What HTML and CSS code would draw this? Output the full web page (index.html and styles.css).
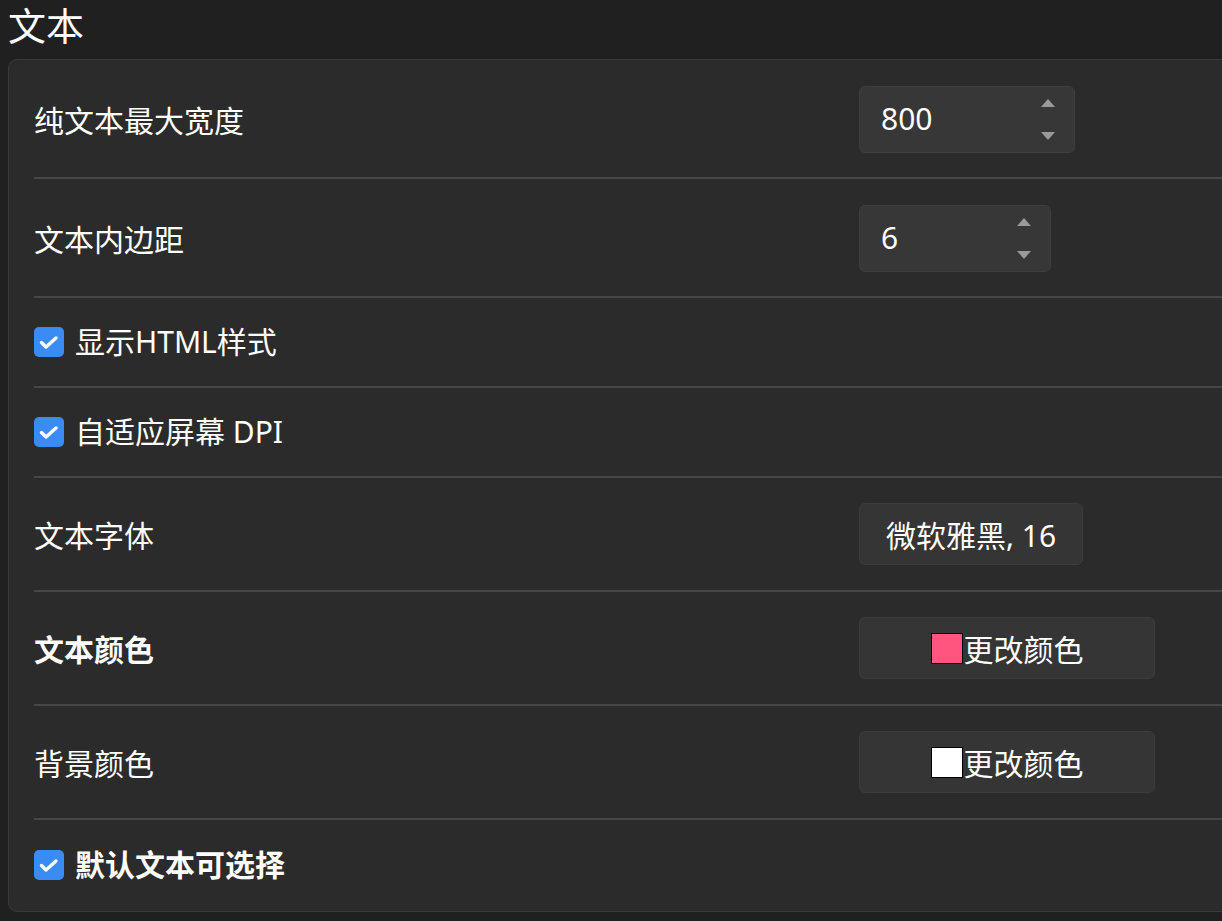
FILE: index.html
```html
<!DOCTYPE html>
<html lang="zh-CN">
<head>
<meta charset="utf-8">
<title>文本</title>
<link rel="stylesheet" href="styles.css">
</head>
<body>
<div class="page">
  <h1 class="title">文本</h1>
  <div class="panel">
    <div class="row row-spin">
      <div class="label">纯文本最大宽度</div>
      <div class="spin spin-wide">
        <span class="spin-value">800</span>
        <span class="arrows"><span class="up"></span><span class="down"></span></span>
      </div>
    </div>
    <div class="sep"></div>
    <div class="row row-spin">
      <div class="label">文本内边距</div>
      <div class="spin spin-narrow">
        <span class="spin-value">6</span>
        <span class="arrows"><span class="up"></span><span class="down"></span></span>
      </div>
    </div>
    <div class="sep"></div>
    <div class="row row-check">
      <label class="check"><span class="box"><svg viewBox="0 0 30 30" width="30" height="30"><path d="M7.5 15.5 L12 20 L22 11" fill="none" stroke="#fff" stroke-width="3.4" stroke-linecap="round" stroke-linejoin="round"/></svg></span><span class="check-text">显示HTML样式</span></label>
    </div>
    <div class="sep"></div>
    <div class="row row-check">
      <label class="check"><span class="box"><svg viewBox="0 0 30 30" width="30" height="30"><path d="M7.5 15.5 L12 20 L22 11" fill="none" stroke="#fff" stroke-width="3.4" stroke-linecap="round" stroke-linejoin="round"/></svg></span><span class="check-text">自适应屏幕 DPI</span></label>
    </div>
    <div class="sep"></div>
    <div class="row row-btn">
      <div class="label">文本字体</div>
      <button class="btn btn-font">微软雅黑, 16</button>
    </div>
    <div class="sep"></div>
    <div class="row row-btn">
      <div class="label bold">文本颜色</div>
      <button class="btn btn-color"><span class="swatch swatch-pink"></span>更改颜色</button>
    </div>
    <div class="sep"></div>
    <div class="row row-btn">
      <div class="label">背景颜色</div>
      <button class="btn btn-color"><span class="swatch swatch-white"></span>更改颜色</button>
    </div>
    <div class="sep"></div>
    <div class="row row-check row-last">
      <label class="check"><span class="box"><svg viewBox="0 0 30 30" width="30" height="30"><path d="M7.5 15.5 L12 20 L22 11" fill="none" stroke="#fff" stroke-width="3.4" stroke-linecap="round" stroke-linejoin="round"/></svg></span><span class="check-text bold">默认文本可选择</span></label>
    </div>
  </div>
</div>
</body>
</html>
```

FILE: styles.css
```css
html, body {
  margin: 0;
  padding: 0;
  background: #202020;
  overflow: hidden;
  width: 1222px;
  height: 921px;
}

body {
  font-family: "Noto Sans", "Noto Sans CJK SC", sans-serif;
  color: #ffffff;
}

.page {
  padding: 0 0 0 8px;
}

.title {
  margin: 0;
  width: max-content;
  font-size: 38px;
  font-weight: 400;
  line-height: 46px;
  height: 59px;
  padding-top: 1px;
  box-sizing: border-box;
  font-family: "Noto Sans CJK SC", sans-serif;
}

.panel {
  background: #2b2b2b;
  border: 1px solid #3a3a3a;
  border-radius: 9px;
  width: 1400px;
  height: 853px;
  box-sizing: border-box;
  padding: 0 0 0 25px;
}

.row {
  display: grid;
  grid-template-columns: 825px auto;
  align-items: center;
  box-sizing: border-box;
}

.row-spin { height: 117px; padding-top: 1px; }
.row-check { height: 88px; }
.row-btn { height: 112px; }
.row-last { height: 89px; }

.sep {
  height: 2px;
  background: #474747;
}

.label {
  font-size: 30px;
  font-family: "Noto Sans CJK SC", sans-serif;
  line-height: 40px;
  color: #ffffff;
}

.bold { font-weight: 700; }

.spin {
  height: 67px;
  box-sizing: border-box;
  background: #373737;
  border: 1px solid #3e3e3e;
  border-radius: 6px;
  display: flex;
  align-items: center;
  justify-content: space-between;
  padding: 0 19px 0 21px;
}

.spin-wide { width: 216px; }
.spin-narrow { width: 192px; }

.spin-value {
  font-size: 30px;
  line-height: 40px;
  font-family: "Noto Sans", sans-serif;
}

.arrows {
  display: flex;
  flex-direction: column;
  justify-content: space-between;
  height: 41px;
}

.up, .down {
  width: 0;
  height: 0;
  border-left: 7px solid transparent;
  border-right: 7px solid transparent;
}

.up { border-bottom: 8px solid #9a9a9a; }
.down { border-top: 8px solid #9a9a9a; }

.check {
  display: flex;
  align-items: center;
  gap: 11px;
}

.box {
  width: 30px;
  height: 30px;
  border-radius: 5px;
  background: #3b8bf5;
  display: block;
  flex: none;
}

.box svg { display: block; }

.check-text {
  font-size: 30px;
  line-height: 40px;
  font-family: "Noto Sans", "Noto Sans CJK SC", sans-serif;
}

.btn {
  height: 62px;
  box-sizing: border-box;
  background: #353535;
  border: 1px solid #3c3c3c;
  border-radius: 6px;
  color: #ffffff;
  font-size: 30px;
  font-family: "Noto Sans", "Noto Sans CJK SC", sans-serif;
  display: flex;
  align-items: center;
  justify-content: center;
  padding: 0;
}

.btn-font { width: 224px; }
.btn-color { width: 296px; }

.swatch {
  width: 32px;
  height: 31px;
  box-sizing: border-box;
  border: 1px solid #000;
  display: block;
  margin-right: 1px;
}

.swatch-pink { background: #ff557f; }
.swatch-white { background: #ffffff; }
```
